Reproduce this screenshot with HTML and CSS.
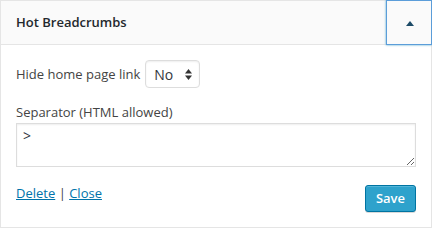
FILE: index.html
```html
<!DOCTYPE html>
<html>
<head>
<meta charset="utf-8">
<link rel="stylesheet" href="styles.css">
</head>
<body>
<div class="widget">
  <div class="widget-top">
    <h3 class="widget-title">Hot Breadcrumbs</h3>
    <button class="widget-toggle" type="button" aria-label="Toggle">
      <svg width="8" height="5" viewBox="0 0 8 5"><polygon points="4,0 8,5 0,5" fill="#1c4b67"/></svg>
    </button>
  </div>
  <div class="widget-inside">
    <div class="field-row">
      <label class="field-label" for="hide-home">Hide home page link</label>
      <span class="select-wrap">
        <select id="hide-home" class="select"><option>No</option><option>Yes</option></select>
        <svg class="select-arrows" width="7" height="11" viewBox="0 0 7 11"><polygon points="3.5,0 7,4.5 0,4.5" fill="#333"/><polygon points="0,6.5 7,6.5 3.5,11" fill="#333"/></svg>
      </span>
    </div>
    <label class="block-label" for="sep">Separator (HTML allowed)</label>
    <textarea id="sep" class="textarea">&gt;</textarea>
    <div class="widget-control">
      <div class="control-links"><a href="#">Delete</a> | <a href="#">Close</a></div>
      <button class="button-primary" type="button">Save</button>
    </div>
  </div>
</div>
</body>
</html>
```
FILE: styles.css
```css
html, body {
  margin: 0;
  padding: 0;
  background: #fff;
}
body {
  font-family: "Open Sans", "Liberation Sans", sans-serif;
  color: #444;
  font-size: 13px;
}
.widget {
  width: 432px;
  box-sizing: border-box;
  border: 1px solid #e5e5e5;
  background: #fff;
  box-shadow: 0 1px 1px rgba(0,0,0,.04);
}
.widget-top {
  display: flex;
  align-items: stretch;
  height: 43px;
  background: #fafafa;
  border-bottom: 1px solid #e5e5e5;
}
.widget-title {
  flex: 1;
  margin: 0;
  padding-left: 15px;
  font-size: 13px;
  font-weight: 600;
  color: #23282d;
  line-height: 43px;
}
.widget-toggle {
  width: 46px;
  margin: -1px -1px -1px 0;
  padding: 0;
  border: 1px solid #5b9dd9;
  box-shadow: 0 0 2px rgba(30,140,190,.8);
  background: #fafafa;
  display: flex;
  align-items: center;
  justify-content: center;
  cursor: pointer;
}
.widget-toggle svg {
  display: block;
  margin-left: 1px;
  margin-top: 1px;
}
.widget-inside {
  padding: 15px 15px 15px;
}
.field-row {
  display: flex;
  align-items: center;
  gap: 5px;
  height: 28px;
}
.field-label {
  line-height: 20px;
}
.select-wrap {
  position: relative;
  display: inline-block;
}
.select {
  -webkit-appearance: none;
  appearance: none;
  display: block;
  width: 55px;
  height: 28px;
  box-sizing: border-box;
  border: 1px solid #ddd;
  border-radius: 4px;
  background: #fff;
  padding: 0 8px;
  font-family: "Open Sans", "Liberation Sans", sans-serif;
  font-size: 14px;
  color: #32373c;
  box-shadow: inset 0 1px 2px rgba(0,0,0,.07);
  outline: none;
}
.select-arrows {
  position: absolute;
  right: 8px;
  top: 9px;
  pointer-events: none;
}
.block-label {
  display: block;
  margin-top: 14px;
  line-height: 20px;
}
.textarea {
  display: block;
  width: 400px;
  height: 44px;
  box-sizing: border-box;
  margin-top: 1px;
  border: 1px solid #ddd;
  box-shadow: inset 0 1px 2px rgba(0,0,0,.07);
  padding: 2px 6px;
  font-family: "Open Sans", "Liberation Sans", sans-serif;
  font-size: 14px;
  line-height: 20px;
  color: #32373c;
  outline: none;
}
.widget-control {
  display: flex;
  justify-content: space-between;
  align-items: flex-start;
  margin-top: 16px;
}
.control-links {
  font-size: 13px;
  line-height: 20px;
  color: #444;
}
.control-links a {
  color: #0073aa;
  text-decoration: underline;
}
.button-primary {
  margin-top: 2px;
  height: 27px;
  box-sizing: border-box;
  padding: 0 10px;
  border: 1px solid #0074a2;
  border-radius: 3px;
  background: #2ea2cc;
  color: #fff;
  font-family: "Open Sans", "Liberation Sans", sans-serif;
  font-size: 13px;
  font-weight: 600;
  line-height: 25px;
  box-shadow: inset 0 1px 0 rgba(120,200,230,.5), 0 1px 0 rgba(0,0,0,.15);
  cursor: pointer;
}
```
